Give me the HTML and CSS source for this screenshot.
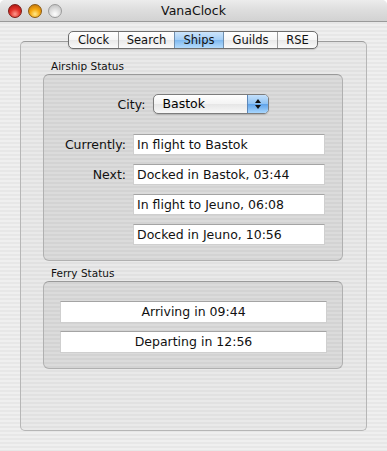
FILE: index.html
```html
<!DOCTYPE html>
<html>
<head>
<meta charset="utf-8">
<link rel="stylesheet" href="styles.css">
</head>
<body>
<div class="window">
  <div class="titlebar">
    <div class="lights">
      <span class="light red"></span>
      <span class="light yellow"></span>
      <span class="light gray"></span>
    </div>
    <div class="title">VanaClock</div>
  </div>
  <div class="content">
    <div class="tabs">
      <div class="tab first">Clock</div>
      <div class="tab">Search</div>
      <div class="tab selected">Ships</div>
      <div class="tab">Guilds</div>
      <div class="tab last">RSE</div>
    </div>
    <div class="tabbox">
      <div class="group-label">Airship Status</div>
      <div class="group airship">
        <div class="city-row">
          <span class="label">City:</span>
          <div class="popup">
            <span class="popup-text">Bastok</span>
            <span class="stepper">
              <svg width="8" height="12" viewBox="0 0 8 12"><path d="M4 1 L7 5 L1 5 Z M4 11 L7 7 L1 7 Z" fill="#111"/></svg>
            </span>
          </div>
        </div>
        <div class="status-grid">
          <span class="label">Currently:</span>
          <div class="field">In flight to Bastok</div>
          <span class="label">Next:</span>
          <div class="field">Docked in Bastok, 03:44</div>
          <span></span>
          <div class="field">In flight to Jeuno, 06:08</div>
          <span></span>
          <div class="field">Docked in Jeuno, 10:56</div>
        </div>
      </div>
      <div class="group-label ferry-label">Ferry Status</div>
      <div class="group ferry">
        <div class="field center">Arriving in 09:44</div>
        <div class="field center">Departing in 12:56</div>
      </div>
    </div>
  </div>
</div>
</body>
</html>
```
FILE: styles.css
```css
html, body {
  margin: 0;
  padding: 0;
  background: #ffffff;
}
body {
  font-family: "DejaVu Sans", "Liberation Sans", sans-serif;
  color: #000;
}
.window {
  width: 387px;
  height: 451px;
  display: flex;
  flex-direction: column;
  border-radius: 5px 5px 0 0;
  overflow: hidden;
  background: repeating-linear-gradient(to bottom, #efefef 0, #efefef 2px, #e7e7e7 2px, #e7e7e7 4px);
}
.titlebar {
  height: 22px;
  flex: none;
  display: flex;
  align-items: center;
  position: relative;
  background: linear-gradient(to bottom, #ececec 0%, #dddddd 50%, #d2d2d2 100%);
  border-bottom: 1px solid #9a9a9a;
  box-sizing: border-box;
}
.lights {
  display: flex;
  gap: 6px;
  padding-left: 8px;
  padding-top: 1px;
}
.light {
  width: 14px;
  height: 14px;
  border-radius: 50%;
  box-sizing: border-box;
}
.light.red {
  background: radial-gradient(circle at 50% 75%, #ff9a8e 0%, #e2322a 45%, #a3100c 100%);
  border: 1px solid #7a1a14;
}
.light.yellow {
  background: radial-gradient(circle at 50% 75%, #ffe98a 0%, #f5a80e 45%, #b8690a 100%);
  border: 1px solid #8a5a10;
}
.light.gray {
  background: radial-gradient(circle at 50% 75%, #ffffff 0%, #dcdcdc 50%, #b8b8b8 100%);
  border: 1px solid #9a9a9a;
}
.title {
  position: absolute;
  left: 0;
  right: 0;
  top: 0;
  height: 22px;
  line-height: 22px;
  text-align: center;
  font-size: 12.5px;
  color: #111;
}
.content {
  flex: 1;
  display: flex;
  flex-direction: column;
  align-items: flex-start;
  padding: 9px 0 0 20px;
}
.tabs {
  position: relative;
  z-index: 1;
  align-self: flex-start;
  margin-left: 48px;
  display: flex;
  height: 18px;
  box-sizing: border-box;
  border: 1px solid #6e6e6e;
  border-radius: 5px;
  overflow: hidden;
  background: linear-gradient(to bottom, #ffffff 0%, #f6f6f6 50%, #e9e9e9 51%, #fafafa 100%);
  box-shadow: 0 1px 1px rgba(0,0,0,0.15);
}
.tab {
  height: 16px;
  line-height: 16px;
  font-size: 11.5px;
  text-align: center;
  color: #111;
  border-left: 1px solid #9a9a9a;
  box-sizing: border-box;
}
.tab.first { border-left: none; width: 49px; }
.tab:nth-child(2) { width: 56px; }
.tab.selected { width: 49px; background: linear-gradient(to bottom, #cde5fb 0%, #a3cdf5 50%, #7fb9f0 51%, #b5dcfd 100%); border-left-color: #6f8fb0; }
.tab:nth-child(4) { width: 54px; border-left-color: #6f8fb0; }
.tab.last { width: 40px; }
.tabbox {
  margin-top: -8px;
  width: 347px;
  height: 390px;
  box-sizing: border-box;
  border: 1px solid #b6b6b6;
  border-top-color: #9c9c9c;
  border-radius: 5px;
  background: rgba(0,0,0,0.025);
  padding: 17px 23px 0 22px;
  display: flex;
  flex-direction: column;
}
.group-label {
  font-size: 10.5px;
  line-height: 14px;
  height: 14px;
  padding-left: 8px;
  color: #111;
  margin-bottom: 1px;
}
.ferry-label {
  margin-top: 5px;
}
.group {
  box-sizing: border-box;
  border: 1px solid #b0b0b0;
  border-top-color: #9a9a9a;
  border-radius: 6px;
  background: rgba(0,0,0,0.06);
}
.airship {
  height: 187px;
  padding-top: 19px;
}
.city-row {
  display: flex;
  align-items: center;
  justify-content: center;
  gap: 8px;
  height: 20px;
  padding-left: 1px;
}
.label {
  font-size: 12.5px;
  color: #111;
}
.popup {
  width: 116px;
  height: 20px;
  box-sizing: border-box;
  border: 1px solid #7c7c7c;
  border-radius: 5px;
  display: flex;
  overflow: hidden;
  background: linear-gradient(to bottom, #ffffff 0%, #f3f3f3 50%, #e6e6e6 51%, #f8f8f8 100%);
  box-shadow: 0 1px 1px rgba(0,0,0,0.15);
}
.popup-text {
  flex: 1;
  font-size: 12.5px;
  line-height: 18px;
  padding-left: 8px;
}
.stepper {
  width: 20px;
  display: flex;
  align-items: center;
  justify-content: center;
  border-left: 1px solid #5d87b8;
  background: linear-gradient(to bottom, #c4e0fb 0%, #8ec2f3 50%, #5fa3ea 51%, #a8d6fd 100%);
}
.status-grid {
  margin-top: 20px;
  display: grid;
  grid-template-columns: 82px 192px;
  column-gap: 7px;
  row-gap: 9px;
  align-items: center;
}
.status-grid .label {
  text-align: right;
}
.field {
  height: 21px;
  box-sizing: border-box;
  background: #ffffff;
  border: 1px solid #cfcfcf;
  border-top-color: #a4a4a4;
  font-size: 12.5px;
  line-height: 19px;
  padding-left: 3px;
  color: #111;
}
.ferry {
  height: 88px;
  padding: 19px 15px 0 16px;
  display: flex;
  flex-direction: column;
  gap: 8px;
}
.field.center {
  height: 22px;
  line-height: 20px;
  text-align: center;
  padding-left: 0;
}
```
